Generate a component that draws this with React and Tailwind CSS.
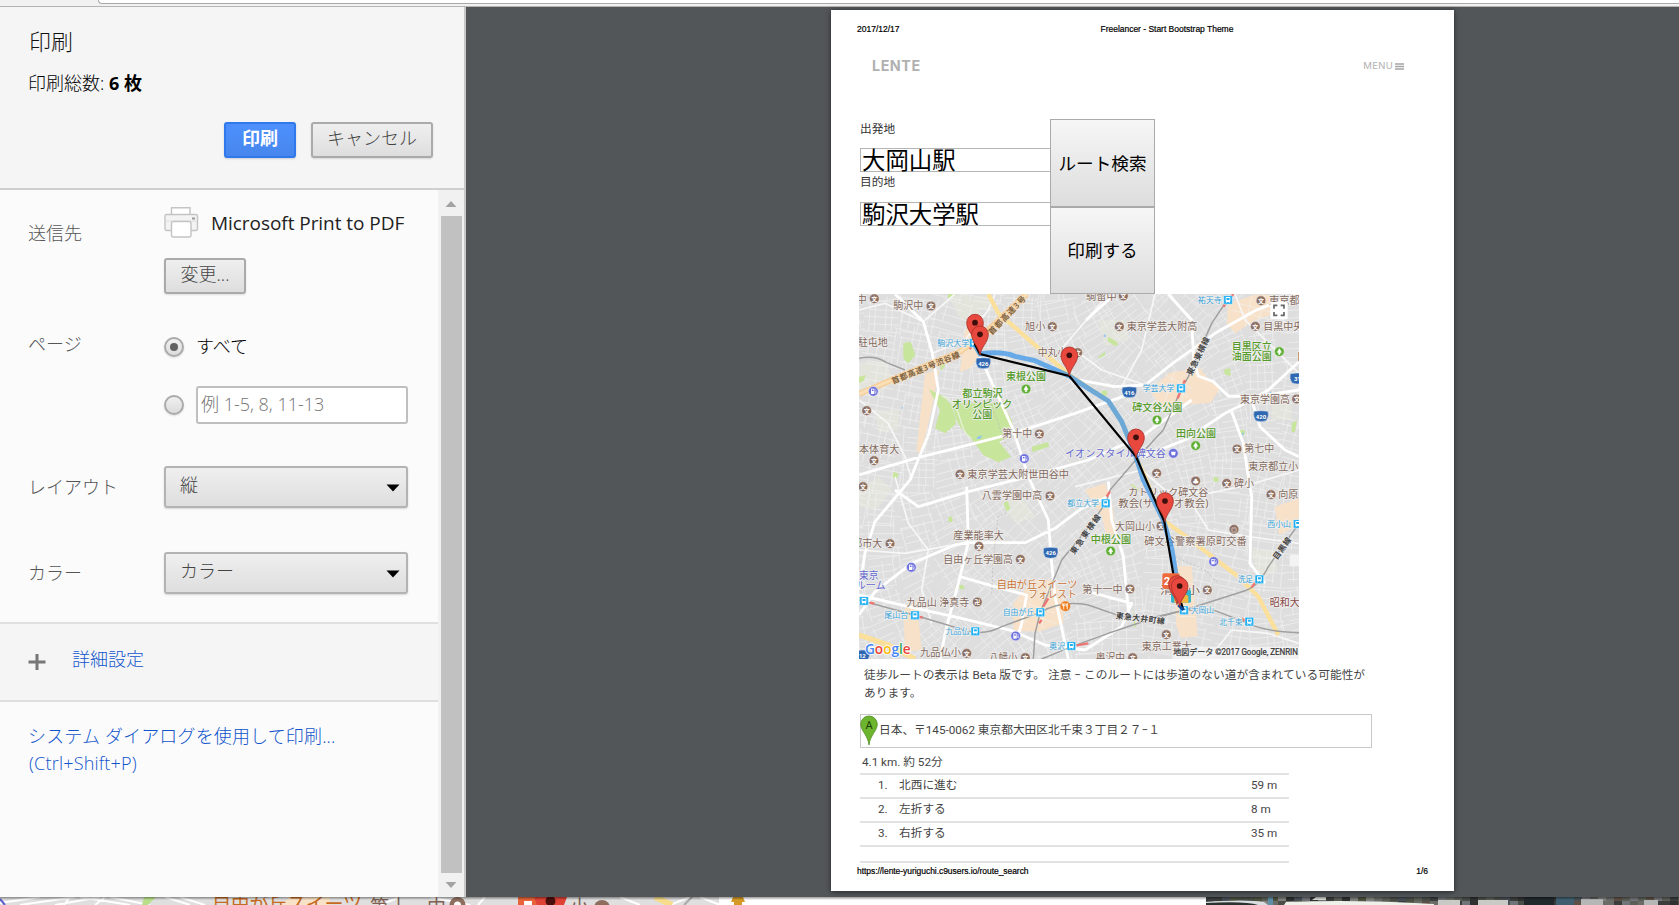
import React from "react";

const UI = "font-['Open_Sans','Noto_Sans_CJK_JP',sans-serif]";
const CJK = "'Noto Sans', 'Noto Sans CJK JP', sans-serif";

/* ---------- deterministic minor streets ---------- */
function rng(seed) {
  let s = seed;
  return () => {
    s = (s * 1664525 + 1013904223) % 4294967296;
    return s / 4294967296;
  };
}
const streets = (() => {
  const r = rng(11);
  let d = "";
  for (let cy = -20; cy < 1140; cy += 96) {
    for (let cx = -20; cx < 1360; cx += 104) {
      const a = -0.35 + Math.sin(cx / 210 + cy / 330) * 0.5 + r() * 0.15;
      const c = Math.cos(a), s = Math.sin(a);
      for (let i = 0; i < 5; i++) {
        const o = (i - 2) * 22 + r() * 9;
        const l1 = 28 + r() * 36, l2 = 28 + r() * 36;
        d += `M${(cx - s * o - c * l1).toFixed(0)} ${(cy + c * o - s * l1).toFixed(0)}L${(cx - s * o + c * l2).toFixed(0)} ${(cy + c * o + s * l2).toFixed(0)}`;
        if (r() > 0.35) {
          const p = (i - 2) * 24 + r() * 9;
          d += `M${(cx + c * p + s * l1).toFixed(0)} ${(cy + s * p - c * l1).toFixed(0)}L${(cx + c * p - s * l2).toFixed(0)} ${(cy + s * p + c * l2).toFixed(0)}`;
        }
      }
    }
  }
  return d;
})();

const majorRoads = [
  "M120 12L205 95L232 190L250 300L222 430L165 570L60 695L30 790L12 900",
  "M120 600L190 650L340 605L520 560L700 510L860 440L1010 330",
  "M12 555L180 505L300 475L475 430L660 370L830 310",
  "M12 975L60 905L170 820L300 765L340 757L510 758L600 715L680 655L760 620",
  "M335 590L340 757L310 880L275 1010L255 1107",
  "M12 915L160 950L320 985L470 1022L570 1065L690 1080",
  "M315 860L420 890L515 915L500 1000L485 1050",
  "M375 200L430 320L475 420L520 560L580 690L588 800L600 920L640 1107",
  "M660 268L780 290L870 285L960 215L1080 130L1200 62L1332 10",
  "M940 12L1010 90L1016 210L1030 258L1075 275L1120 318L1200 320L1332 300",
  "M860 500L990 450L1110 370L1190 330L1240 300L1332 215",
  "M1130 365L1165 460L1180 560L1190 620L1185 820L1230 880",
  "M1190 330L1215 410L1290 480L1332 500",
  "M760 575L770 690L805 800L820 960",
  "M693 90L780 12",
  "M690 1080L800 1010L830 940L700 905",
];
const midRoads = [
  "M12 330L100 400L150 500L170 570",
  "M600 200L720 60L760 12",
  "M1140 12L1170 90L1332 250",
  "M660 590L860 540L930 600L1060 610L1180 585L1332 540",
  "M1060 1107L1130 1020L1240 1030L1332 1060",
  "M12 780L150 790L340 757",
  "M12 60L90 40L205 95L300 12",
  "M232 190L330 150L400 60L420 12",
  "M120 560L160 700L220 780L200 900L230 1000",
  "M860 180L900 12M860 180L800 290M660 180L740 240L870 285",
  "M1010 640L1060 720L1180 740L1332 760",
];

const mapLabels = [
  // brown
  ["中", 5, 28, 30, "b"], ["駒沢中", 115, 47, 90, "b"], ["旭小", 510, 109, 61, "b"], ["中丸小", 548, 188, 88, "b"],
  ["駐屯地", 8, 157, 90, "b"], ["本体育大", 12, 477, 121, "b"], ["第十中", 442, 431, 90, "b"], ["東京学芸大附世田谷中", 337, 552, 305, "b"],
  ["駒留中", 693, 20, 92, "b"], ["東京学芸大附高", 815, 109, 212, "b"], ["東京都", 1242, 30, 92, "b"], ["目黒中央", 1225, 108, 120, "b"],
  ["東京学園高", 1155, 327, 150, "b"], ["第七中", 1168, 476, 90, "b"], ["東京都立小", 1180, 528, 150, "b"], ["碑小", 1137, 580, 60, "b"],
  ["カトリック碑文谷", 820, 608, 240, "b"], ["教会(サレジオ教会)", 790, 640, 270, "b"], ["向原", 1270, 614, 60, "b"], ["大岡山小", 780, 708, 120, "b"],
  ["碑文谷警察署原町交番", 868, 754, 307, "b"], ["清水小", 915, 900, 120, "b"], ["昭和大", 1244, 938, 90, "r"], ["第十一中", 682, 897, 121, "b"],
  ["東京工業大", 860, 1069, 150, "b"], ["奥沢中", 722, 1102, 88, "b"], ["八雲学園中高", 380, 617, 182, "b"], ["産業能率大", 295, 735, 152, "b"],
  ["自由ヶ丘学園高", 265, 808, 209, "b"], ["都市大", -8, 761, 90, "b"], ["九品山 浄真寺", 155, 936, 188, "b"], ["九品仏小", 195, 1088, 123, "b"],
  ["八幡小", 402, 1102, 86, "b"], ["目", 1325, 200, 30, "b"],
  // green
  ["東根公園", 453, 260, 120, "g"], ["都立駒沢", 322, 311, 121, "g"], ["オリンピック", 290, 342, 182, "g"], ["公園", 352, 374, 60, "g"],
  ["目黒区立", 1130, 169, 120, "g"], ["油面公園", 1130, 200, 120, "g"], ["碑文谷公園", 832, 353, 150, "g"], ["田向公園", 963, 431, 120, "g"], ["中根公園", 707, 747, 121, "g"],
  // purple
  ["イオンスタイル碑文谷", 630, 490, 303, "p"], ["東京", 12, 855, 58, "p"], ["ルーム", 2, 886, 90, "p"],
  // orange
  ["自由が丘スイーツ", 425, 882, 242, "o"], ["フォレスト", 520, 913, 145, "o"],
  // stations
  ["駒沢大学", 247, 159, 96, "s"], ["祐天寺", 1028, 30, 72, "s"], ["学芸大学", 863, 295, 95, "s"], ["都立大学", 637, 639, 95, "s"],
  ["西小山", 1237, 702, 71, "s"], ["洗足", 1148, 867, 46, "s"], ["大岡山", 1007, 961, 70, "s"], ["北千束", 1093, 995, 69, "s"],
  ["自由が丘", 443, 966, 94, "s"], ["尾山台", 88, 974, 72, "s"], ["九品仏", 272, 1023, 71, "s"], ["奥沢", 583, 1067, 47, "s"],
];
const labelColor = { b: "#84695d", r: "#8a4a4a", g: "#559a2b", p: "#6468cf", o: "#cc7434", s: "#3aa3da" };

const schools = [
  [58, 26], [228, 48], [592, 110], [668, 188], [35, 362], [57, 512], [553, 432], [315, 553], [805, 18], [793, 110], [1218, 32], [1201, 109],
  [1325, 327], [1146, 477], [905, 550], [1022, 573], [1115, 580], [1248, 614], [918, 708], [1137, 718], [1057, 900], [825, 897], [934, 1034],
  [833, 1103], [585, 618], [372, 769], [496, 808], [105, 761], [367, 936], [335, 1090], [511, 1103], [24, 590],
];
const poiGlyph = { 15: "♣", 19: "◎", 28: "卍" };
const stations = [[357, 159], [1119, 30], [978, 295], [752, 640], [1328, 702], [1213, 868], [987, 961], [1183, 995], [556, 967], [180, 976], [361, 1024], [649, 1068], [27, 933]];
const gas = [[55, 304], [508, 506], [169, 832], [482, 1038], [1076, 815], [955, 490]];
const parks = [[513, 297], [1273, 185], [906, 390], [1022, 467], [767, 783]];
const shields = [["426", 385, 220], ["416", 823, 307], ["420", 1218, 379], ["31", 1327, 266], ["426", 587, 789], ["12", 22, 1097]];

function Pin({ x, y }) {
  return (
    <g transform={`translate(${x} ${y})`}>
      <path d="M0 62C-4 36-25 24-25 0A25 25 0 0 1 25 0C25 24 4 36 0 62Z" fill="#e8483d" stroke="#a8322a" strokeWidth="2.5" />
      <circle r="8.5" fill="#3f0f0b" />
    </g>
  );
}

function RouteMap() {
  return (
    <svg className="block h-[365px] w-[440px] shrink-0" viewBox="12 12 1320 1095">
      <rect x="12" y="12" width="1320" height="1095" fill="#dedede" />
      <g fill="#e3e4dc">
        <path d="M20 215h75l20 60-60 50-50-20zM60 360h70v60l-60 10zM280 20l60-8 40 60-60 20zM12 600l60-40 40 40-50 60-50-10zM730 90h80l10 60-70 20zM1190 780l60 0 20 60-60 30zM440 640l60-20 40 60-60 20zM350 20h60v40h-50zM1250 340h60v50h-60z" />
      </g>
      <path d={streets} fill="none" stroke="#efefef" strokeWidth="2.4" />
      <g fill="#f7e1c8">
        <path d="M885 300l60-52 90-14 30 40 30 20-28 44-80 6-70 8zM1120 40l80-26 60 0 20 50-80 26-60 40-25-30zM475 940l60-70 60 0 30 60 0 70-70 24-80 0zM210 250l42-10-20 110-34 140-14-6zM690 600l60-20 20 50 15 120-25 8-20-80zM960 828h50l18 210-50 6-15-40zM145 960l40-30 15 150-50 5zM330 120l30-15 15 90-30 40-30 10zM1260 650l72-25v80l-60 30z" />
      </g>
      <path d="M900 270l100 50M930 255l80 40M960 240l-30 95M1000 245l-20 90M1130 60l120 30M1150 40l130 35M1190 20l-20 90M1230 15l-20 80M490 930l110 40M500 960l100 40M540 880l-30 120M580 875l-20 140M965 880h50M968 930h50M970 980h55" stroke="#f4eee6" strokeWidth="2.5" />
      <g fill="#c7e59b">
        <path d="M222 298L262 318L290 345L300 380L303 402L270 430L240 415L255 360ZM292 340L440 340L470 390L478 432L432 455L468 500L430 517L385 495L345 440L318 415L302 385ZM145 160l22-5 14 40-22 26-14-16zM530 470l50-14 2 14-50 16zM250 210l15-12 5 30-12 14zM446 640l12-8 8 26-12 6zM280 680l12 0 0 16-12 0zM310 885l14 0 6 10-14 4zM760 140l25 15 5 10-12 2-20-14zM730 200l20-15 0 10-18 10zM1105 240l20-6 2 24-16-4zM830 580l22 20-8 10-14-10zM835 960l8 50-6 0zM1310 400l16-10-6 36-10 0zM1075 560l15 3 0 12-14 0zM740 302l16 0 0 14-16 4zM1155 420l14 0 0 14-14 4zM115 545l16 6-6 16-12-4zM280 12l25 0-15 12-12 0zM12 260l20-5-6 18-14 6z" />
      </g>
      <path d="M262 318Q300 330 315 385T350 445" fill="none" stroke="#e6f0d8" strokeWidth="4" />
      <g fill="#8fc4f2">
        <path d="M368 440l14-4-6 10-12 2zM746 135l6-2v8h-6zM1160 428l5 0 0 8-5 0zM140 350l3 0 0 6-3 0zM1245 305l4 0 0 5-4 0z" />
      </g>
      <path d={midRoads.join("")} fill="none" stroke="#f7f7f7" strokeWidth="5" strokeLinejoin="round" />
      <path d={majorRoads.join("")} fill="none" stroke="#fff" strokeWidth="8.500" strokeLinejoin="round" />
      <g fill="none" strokeLinejoin="round">
        <path d="M12 312L110 270L315 185L400 120L515 12" stroke="#f5cf9c" strokeWidth="18" />
        <path d="M12 312L110 270L315 185L400 120L515 12" stroke="#fae0b8" strokeWidth="8" />
        <path d="M400 12L430 70L500 130L643 255L760 333L800 395L843 500L925 690L1000 745L1150 860L1210 920L1270 1035" stroke="#fbe09c" strokeWidth="13" />
        <path d="M12 1035L100 1065L180 1107" stroke="#fbe09c" strokeWidth="16" />
        <g stroke="#a0a0a0" strokeWidth="4.5">
          <path d="M1120 25L1070 100L1000 260L980 295L925 420L860 490L765 600L752 640L690 725L620 810L556 967L540 1030L535 1107" />
          <path d="M12 930L180 976L340 1024Q395 1035 440 1010L556 967Q620 930 700 945L800 980L885 985L987 961L1170 902Q1210 890 1240 830L1332 700" />
          <path d="M560 1107L650 1070L760 1030L885 988L987 961L1070 958L1180 1000Q1230 1025 1332 1028" />
          <path d="M12 205Q60 195 95 218L150 240" />
        </g>
        <path d="M400 320L430 400L450 460L520 520M410 910L415 800L430 680L460 665M960 800L1050 840L1090 880" stroke="#bdbdbd" strokeWidth="2.500" strokeDasharray="6 6" />
        <g stroke="#ee7672" strokeWidth="7">
          <path d="M345 178L357 150M1105 50L1135 12M968 325L990 270M560 990L552 1000M565 950L580 925M45 938L58 941M190 980L203 983M665 1066L700 1060M755 620L765 604M1160 985L1170 992M1200 878L1190 892" />
        </g>
      </g>
      <g fontFamily={CJK} fontWeight="400" stroke="#efefed" strokeWidth="5" paintOrder="stroke" strokeLinejoin="round">
        {mapLabels.map(([t, x, y, w, k], i) => (
          <text key={i} x={x} y={y + (k === "s" ? 9 : 11)} fontSize={k === "s" ? 24 : 30} fontWeight={k === "g" ? 500 : 400} textLength={w} lengthAdjust="spacingAndGlyphs" fill={labelColor[k]}>{t}</text>
        ))}
      </g>
      <g fontFamily={CJK} fontWeight="600" fontSize="24" textAnchor="middle" stroke="#eee" strokeWidth="4" paintOrder="stroke">
        <g fill="#7d6244" stroke="#f7d9ae">
          <text transform="translate(215 241) rotate(-22)" textLength="218">首都高速3号渋谷線</text>
          <text transform="translate(462 82) rotate(-46)" textLength="150">首都高速3号</text>
        </g>
        <g fill="#444">
          <text transform="translate(1037 202) rotate(-64)" textLength="124">東急東横線</text>
          <text transform="translate(698 738) rotate(-55)" textLength="140">東急東横線</text>
          <text transform="translate(855 994) rotate(7)" textLength="148">東急大井町線</text>
          <text transform="translate(1288 780) rotate(-54)" textLength="76">目黒線</text>
        </g>
      </g>
      {schools.map(([x, y], i) => (
        <g key={i} transform={`translate(${x} ${y})`}>
          <circle r="14.5" fill="#8d7063" stroke="#f0ece9" strokeWidth="1.5" />
          <text y="7" fontSize="18" fontWeight="700" fontFamily={CJK} textAnchor="middle" fill="#fff">{poiGlyph[i] || "文"}</text>
        </g>
      ))}
      {stations.map(([x, y], i) => (
        <g key={i} transform={`translate(${x} ${y})`}>
          <rect x="-13" y="-13" width="26" height="26" rx="2" fill="#1eaef2" stroke="#fff" strokeWidth="1.5" />
          <rect x="-7" y="-9" width="14" height="15" rx="2" fill="#fff" />
          <rect x="-4.500" y="-6" width="9" height="6" fill="#1eaef2" />
          <path d="M-6 10L-3 6M6 10L3 6" stroke="#fff" strokeWidth="2" />
        </g>
      ))}
      {gas.map(([x, y], i) => (
        <g key={i} transform={`translate(${x} ${y})`}>
          <circle r="14.500" fill="#6c70dc" stroke="#eef" strokeWidth="1.5" />
          {i < 5 ? (
            <g>
              <path d="M-7 8V-8H3V8Z" fill="#fff" />
              <path d="M-4.500-5.500H.5V-1H-4.500Z" fill="#6c70dc" />
              <path d="M3 1h3v5h2v-9l-3-4" fill="none" stroke="#fff" strokeWidth="1.500" />
            </g>
          ) : <path d="M-7-5H7L5 6H-5Z" fill="#fff" />}
        </g>
      ))}
      {parks.map(([x, y], i) => (
        <g key={i} transform={`translate(${x} ${y})`}>
          <circle r="14.500" fill="#5fae35" stroke="#eef5e8" strokeWidth="1.500" />
          <path d="M0-9L6 2H2V8H-2V2H-6Z" fill="#fff" stroke="#fff" strokeLinejoin="round" strokeWidth="2" />
        </g>
      ))}
      <circle cx="631" cy="949" r="15" fill="#f08021" />
      <path d="M626 940v18M622 940v6h8v-6M637 958v-18q-5 4-3 10" stroke="#fff" strokeWidth="2.500" fill="none" />
      {shields.map(([t, x, y], i) => (
        <g key={i} transform={`translate(${x} ${y})`}>
          <path d="M-21-15Q0-19 21-15Q25 0 16 13Q0 19-16 13Q-25 0-21-15Z" fill="#2f67b0" stroke="#dfe8f2" strokeWidth="1.500" />
          <text y="7" fontSize="18" fontWeight="700" fontFamily="Roboto, sans-serif" textAnchor="middle" fill="#fff">{t}</text>
        </g>
      ))}
      <path d="M360 165L375 192Q440 182 480 199L540 212L643 258L700 295L760 333L800 395L843 500L865 570L925 690L950 775L963 855L970 910" fill="none" stroke="#3f97e8" strokeOpacity=".75" strokeWidth="15" strokeLinejoin="round" />
      <path d="M358 160L375 192L643 258L843 500L928 695L958 870L985 960" fill="none" stroke="#000" strokeWidth="6.500" />
      <g>
        <rect x="922" y="850" width="52" height="46" rx="5" fill="#ee6a3c" />
        <text x="926" y="886" fontFamily="Roboto, sans-serif" fontWeight="700" fontSize="34" fill="#fff">2</text>
        <rect x="948" y="900" width="60" height="38" rx="4" fill="#35b3c9" />
        <path d="M958 938V918L978 904L1000 918V938Z" fill="#f3b640" />
        <path d="M970 945L985 960" stroke="#0d47a1" strokeWidth="9" />
      </g>
      <Pin x={360} y={98} />
      <Pin x={375} y={133} />
      <Pin x={643} y={196} />
      <Pin x={843} y={442} />
      <Pin x={930} y={633} />
      <Pin x={966} y={882} />
      <Pin x={974} y={888} />
      <rect x="1246" y="36" width="52" height="52" rx="4" fill="#fff" />
      <path d="M1257 56V46H1267M1277 46H1287V56M1287 66V76H1277M1267 76H1257V66" fill="none" stroke="#666" strokeWidth="5" />
      <rect x="1304" y="795" width="28" height="34" fill="#f3f3f3" />
      <g fontFamily="'Open Sans', sans-serif" fontWeight="600" fontSize="43" stroke="#fff" strokeWidth="5" paintOrder="stroke">
        <text x="30" y="1091" textLength="137" lengthAdjust="spacingAndGlyphs">
          <tspan fill="#4285f4">G</tspan><tspan fill="#ea4335">o</tspan><tspan fill="#fbbc05">o</tspan><tspan fill="#4285f4">g</tspan><tspan fill="#34a853">l</tspan><tspan fill="#ea4335">e</tspan>
        </text>
      </g>
      <rect x="952" y="1070" width="380" height="37" fill="#f5f5f5" fillOpacity=".85" />
      <text x="955" y="1096" fontSize="25" fontFamily="Roboto, 'Noto Sans CJK JP', sans-serif" fill="#333" stroke="#333" strokeWidth=".6" textLength="374" lengthAdjust="spacingAndGlyphs">地図データ ©2017 Google, ZENRIN</text>
    </svg>
  );
}

/* ---------- strip of the page behind the dialog ---------- */
const photo = (() => {
  const r = rng(5);
  const cols = ["#4a4e48", "#5b5f58", "#3b3e3c", "#6a6c68", "#4c5440", "#70757a", "#5d4f46", "#485058", "#82827e", "#2f3231"];
  const out = [];
  for (let x = 0; x < 473; x += 8) for (let y = 0; y < 8; y += 4) out.push([x, y, cols[Math.floor(r() * cols.length)]]);
  return out;
})();

function BehindStrip() {
  return (
    <div className="relative flex h-2 bg-white">
      <svg className="block h-2 w-[770px] shrink-0" viewBox="0 0 770 8">
        <rect width="770" height="8" fill="#fff" />
        <rect width="719" height="8" fill="#dfdfdf" />
        <path d="M0 6L40 0M20 8L75 0M55 8L100 0M70 0L64 8M105 0L95 8M80 0L130 8M110 0L150 8M180 0L205 8M165 0L190 8M380 8L400 0M430 0L470 8M485 0L478 8M620 0L640 8M690 0L670 8M700 0L720 8" stroke="#fff" strokeWidth="2" />
        <path d="M144 0h12l-8 8h-6z" fill="#b9df8b" />
        <path d="M0 2L5 8" stroke="#5c60cf" strokeWidth="2" />
        <path d="M290 0h40v8h-50z" fill="#f8e2c8" />
        <path d="M655 0L672 8" stroke="#f7dc8c" strokeWidth="6" />
        <path d="M692 0L684 8" stroke="#aaa" strokeWidth="2" />
        <g fontFamily={CJK} fontWeight="400" fontSize="19">
          <text x="212" y="14" fill="#c66a22" textLength="150">自由が丘スイーツ</text>
          <text x="370" y="17" fill="#806152" textLength="76">第十一中</text>
          <text x="570" y="17" fill="#806152">小</text>
        </g>
        <circle cx="457.500" cy="8" r="8" fill="#8d6e5f" />
        <circle cx="457.500" cy="8" r="3.500" fill="#fff" />
        <circle cx="602" cy="11" r="8" fill="#8d6e5f" />
        <rect x="518" y="0" width="20" height="8" fill="#e8653a" />
        <path d="M524 4h8v4h-8" fill="#fff" />
        <path d="M534 0h33l-3 8h-27z" fill="#e04236" />
        <circle cx="550.500" cy="4" r="5" fill="#4a0f0c" />
        <path d="M733 0h10l2 5h-3v3h-8v-3h-3z" fill="#d49a25" />
      </svg>
      <div className="w-[436px] shrink-0 bg-white" />
      <svg className="block h-2 w-[473px] shrink-0" viewBox="0 0 473 8">
        {photo.map(([x, y, c], i) => <rect key={i} x={x} y={y} width="8" height="4" fill={c} />)}
        <path d="M0 8V5Q40 2 58 5L62 8Z" fill="#d9dfe0" />
        <path d="M0 6Q40 4 52 8H0Z" fill="#2b3330" />
        <path d="M62 0h5v8h-5z" fill="#5f8fa8" />
        <path d="M78 8L80 5Q150 2 228 7V8Z" fill="#eef0ea" />
        <path d="M110 0h10v3h-14z" fill="#e2e2dc" />
        <path d="M232 3h22v5h-22zM272 3h30v5h-30z" fill="#c9cac6" />
        <path d="M375 2h22v6h-22zM438 3h14v5h-14z" fill="#b5b7b6" />
        <path d="M318 0h30v8h-30z" fill="#20282c" />
        <path d="M350 0h18v8h-18z" fill="#3f5f70" />
      </svg>
      <div className="absolute inset-x-0 top-0 h-[3px] bg-gradient-to-b from-black/40 to-transparent" />
    </div>
  );
}

/* ---------- print settings ---------- */
const btn = "flex items-center justify-center rounded-[3px] border-2 border-[#aaa] bg-gradient-to-b from-[#efefef] to-[#dedede] text-[18px] text-[#444] shadow-[0_1px_2px_rgba(0,0,0,0.12)]";

function Radio({ checked }) {
  return (
    <span className="flex h-5 w-5 shrink-0 items-center justify-center rounded-full border-2 border-[#aaa] bg-gradient-to-b from-[#f0f0f0] to-[#dcdcdc] shadow-[0_1px_2px_rgba(0,0,0,0.12)]">
      {checked && <span className="h-2 w-2 rounded-full bg-[#606060]" />}
    </span>
  );
}

function Select({ children }) {
  return (
    <div className="flex h-[42px] w-[244px] items-center justify-between rounded-[3px] border-2 border-[#b3b3b3] bg-gradient-to-b from-[#efefef] to-[#dedede] pr-[6px] pl-[14px] text-[18px] text-[#444] shadow-[0_1px_2px_rgba(0,0,0,0.15)]">
      <span className="pb-1">{children}</span>
      <svg className="mt-px h-[8px] w-[14px]" viewBox="0 0 14 8"><path d="M0.500 0.500H13.500L7 7.500Z" fill="#000" /></svg>
    </div>
  );
}

function Row({ label, className, labelClass, children }) {
  return (
    <div className={"flex pl-7 " + className}>
      <div className={"w-[136px] shrink-0 text-[18px] leading-6 text-[#555] " + labelClass}>{label}</div>
      <div>{children}</div>
    </div>
  );
}

function Sidebar() {
  return (
    <div className={"flex w-[466px] shrink-0 border-r-2 border-[#c8c8c8] bg-[#f5f5f5] font-light " + UI}>
      <div className="flex w-full flex-col">
        <div className="h-[183px] shrink-0 border-b-2 border-[#cfcfcf] pl-7">
          <div className="pt-[19px] pl-px text-[22px] leading-[30px] text-[#111]">印刷</div>
          <div className="pt-[15px] text-[18px] leading-6 text-black">印刷総数: <b className="font-bold">6 枚</b></div>
          <div className="flex gap-[15px] pt-[27px] pl-[196px]">
            <div className="flex h-9 w-[72px] items-center justify-center rounded-[3px] border-2 border-[#3079ed] bg-gradient-to-b from-[#4d90fe] to-[#4787ed] pb-1 text-[18px] font-bold text-white shadow-[0_1px_2px_rgba(0,0,0,0.15)]">印刷</div>
            <div className={btn + " h-9 w-[122px] pb-1"}>キャンセル</div>
          </div>
        </div>
        <div className="flex min-h-0 flex-1">
          <div className="w-[438px] shrink-0 bg-[#fbfbfb]">
            <Row label="送信先" className="h-[137px] pt-[17px]" labelClass="pt-[14px]">
              <div className="flex h-[31px] items-center gap-[12px]">
                <svg className="h-[31px] w-[35px]" viewBox="0 0 35 31" fill="#f3f3f3" stroke="#c4c4c4" strokeWidth="1.4">
                  <path d="M7.500 8V.7H26V8" fill="#fff" />
                  <rect x="1" y="7.500" width="32.500" height="16" rx="1.500" />
                  <path d="M1.500 14H33" stroke="#dedede" strokeWidth="1" />
                  <rect x="7.500" y="14.500" width="19.500" height="15.500" rx="2" fill="#fff" />
                  <path d="M28 11.500h3" stroke="#999" strokeWidth="2" />
                </svg>
                <span className="text-[19px] leading-6 font-normal tracking-[-0.05px] text-[#222]">Microsoft Print to PDF</span>
              </div>
              <div className={btn + " mt-5 h-9 w-[82px] pb-1"}>変更...</div>
            </Row>
            <Row label="ページ" className="h-[139px] pt-[10px]" labelClass="-mt-[5px]">
              <div className="flex h-5 items-center gap-[12px] text-[18px] text-black"><Radio checked /><span className="pb-[2px]">すべて</span></div>
              <div className="mt-[29px] flex h-[38px] items-center gap-[12px]">
                <Radio />
                <div className="flex h-[38px] w-[212px] items-center rounded-[3px] border-2 border-[#bfbfbf] bg-white pb-px pl-[3px] text-[18px] text-[#757575]">例 1-5, 8, 11-13</div>
              </div>
            </Row>
            <Row label="レイアウト" className="h-[86px]" labelClass="pt-[9px]"><Select>縦</Select></Row>
            <Row label="カラー" className="h-[70px]" labelClass="pt-[9px]"><Select>カラー</Select></Row>
            <div className="flex h-[80px] items-center border-y-2 border-[#dfdfdf] bg-[#f5f5f5] pl-7 text-[18px] text-[#1155cc]">
              <svg className="h-[18px] w-[18px]" viewBox="0 0 18 18"><path d="M9 1V17M0.500 9H17.500" stroke="#777" strokeWidth="3" /></svg>
              <span className="pb-[6px] pl-[26px]">詳細設定</span>
            </div>
            <div className="pt-[21px] pl-7 text-[#1155cc]">
              <div className="text-[18px] leading-[27px] tracking-[0.15px]">システム ダイアログを使用して印刷...</div>
              <div className="pl-px text-[18px] leading-[27px] tracking-[0.2px]">(Ctrl+Shift+P)</div>
            </div>
          </div>
          <div className="flex flex-1 flex-col items-center bg-[#f1f1f1]">
            <svg className="h-[26px] w-3 shrink-0" viewBox="0 0 12 26"><path d="M0.500 17L6 11L11.500 17Z" fill="#a3a3a3" /></svg>
            <div className="w-[21px] flex-1 bg-[#c1c1c1]" />
            <svg className="h-6 w-3 shrink-0" viewBox="0 0 12 24"><path d="M0.500 9L6 15L11.500 9Z" fill="#a3a3a3" /></svg>
          </div>
        </div>
      </div>
    </div>
  );
}

/* ---------- preview ---------- */
function Step({ n, text, dist }) {
  return (
    <div className="flex h-6 w-[429px] items-center border-b-2 border-[#e2e2e2]">
      <span className="w-[39px] pl-[18px]">{n}.</span>
      <span className="w-[352px]">{text}</span>
      <span>{dist}</span>
    </div>
  );
}

const bigBtn = "flex w-[105px] items-center justify-center border border-[#aaa] bg-gradient-to-b from-[#f6f6f6] to-[#dddddd] pt-[2px] text-[17.600px] text-black";
const field = "flex h-6 items-center border border-r-0 border-[#b5b5b5] pt-[2px] pl-px text-[23.400px] leading-6 text-black";

function Preview() {
  return (
    <div className="flex flex-1 bg-[#525659] pt-[3px] pl-[365px]">
      <div className="h-[881px] w-[623px] shrink-0 bg-white font-['Roboto','Noto_Sans_CJK_JP',sans-serif] shadow-[0_1px_5px_rgba(0,0,0,0.55)]">
        <div className="flex h-[109px] flex-col">
          <div className="flex pt-[13px] pl-[26px] font-['Liberation_Sans',sans-serif] text-[8.500px] leading-3 text-black [-webkit-text-stroke:0.2px_black]">
            <span className="w-[243.500px]">2017/12/17</span>
            <span className="tracking-[-0.02px]">Freelancer - Start Bootstrap Theme</span>
          </div>
          <div className="flex justify-between pt-[21px] pr-[50px] pl-[41px] font-['Inter',sans-serif] leading-5 text-[#b0b0b0]">
            <span className="text-[14.300px] font-bold tracking-[0.550px]">LENTE</span>
            <span className="flex items-center gap-[2px] text-[9.500px] tracking-[0.3px]">MENU
              <svg className="h-[7px] w-[9px]" viewBox="0 0 9 7"><path d="M0 1H9M0 3.500H9M0 6H9" stroke="#a5a5a5" strokeWidth="1.300" /></svg>
            </span>
          </div>
        </div>
        <div className="flex h-[175px] pl-[29px]">
          <div className="w-[190px] text-[11.700px] text-[#333]">
            <div className="h-[29px] pt-px leading-[18px]">出発地</div>
            <div className={field}>大岡山駅</div>
            <div className="h-[30px] pt-px leading-[18px]">目的地</div>
            <div className={field}>駒沢大学駅</div>
          </div>
          <div>
            <div className={bigBtn + " h-[88px]"}>ルート検索</div>
            <div className={bigBtn + " h-[87px]"}>印刷する</div>
          </div>
        </div>
        <div className="pl-[28px]"><RouteMap /></div>
        <div className="pl-[29px] text-[11.700px] text-[#444]">
          <div className="h-[55px] w-[520px] pt-[7px] pl-1 leading-[18px] tracking-[0.04px] whitespace-nowrap">
            徒歩ルートの表示は Beta 版です。 注意 − このルートには歩道のない道が含まれている可能性が<br />あります。
          </div>
          <div className="flex h-[34px] w-[512px] items-center border border-[#c8c8c8]">
            <svg className="-mt-px -ml-px h-[31px] w-[18px]" viewBox="0 0 18 30">
              <path d="M9 29.500C8 20 .7 15 .7 8.800A8.300 8.300 0 0 1 17.300 8.800C17.300 15 10 20 9 29.500Z" fill="#6db52e" stroke="#4c8a1c" strokeWidth=".8" />
              <text x="9" y="13" fontFamily="Roboto, sans-serif" fontSize="11" textAnchor="middle" fill="#1d3d08">A</text>
            </svg>
            <span className="pl-px">日本、〒145-0062 東京都大田区北千束３丁目２７−１</span>
          </div>
          <div className="flex h-[27px] w-[429px] items-center border-b-2 border-[#e2e2e2] pt-[5px] pl-[2px]">4.1 km. 約 52分</div>
          <Step n="1" text="北西に進む" dist="59 m" />
          <Step n="2" text="左折する" dist="8 m" />
          <Step n="3" text="右折する" dist="35 m" />
          <div className="h-4 w-[429px] border-b-2 border-[#e2e2e2]" />
        </div>
        <div className="flex justify-between pt-[2px] pr-[26px] pl-[26px] font-['Liberation_Sans',sans-serif] text-[8.500px] leading-3 text-black [-webkit-text-stroke:0.2px_black]">
          <span className="tracking-[-0.05px]">https://lente-yuriguchi.c9users.io/route_search</span>
          <span>1/6</span>
        </div>
      </div>
    </div>
  );
}

export default function App() {
  return (
    <div className="flex h-[905px] w-[1679px] flex-col overflow-hidden bg-white">
      <div className="h-[7px] shrink-0 border-b border-[#b4b4b4] bg-[#f1f1f1] pl-[98px]">
        <div className="h-1 rounded-bl-[4px] border-b border-l border-[#a9a9a9] bg-white" />
      </div>
      <div className="flex h-[890px] shrink-0">
        <Sidebar />
        <Preview />
      </div>
      <BehindStrip />
    </div>
  );
}
